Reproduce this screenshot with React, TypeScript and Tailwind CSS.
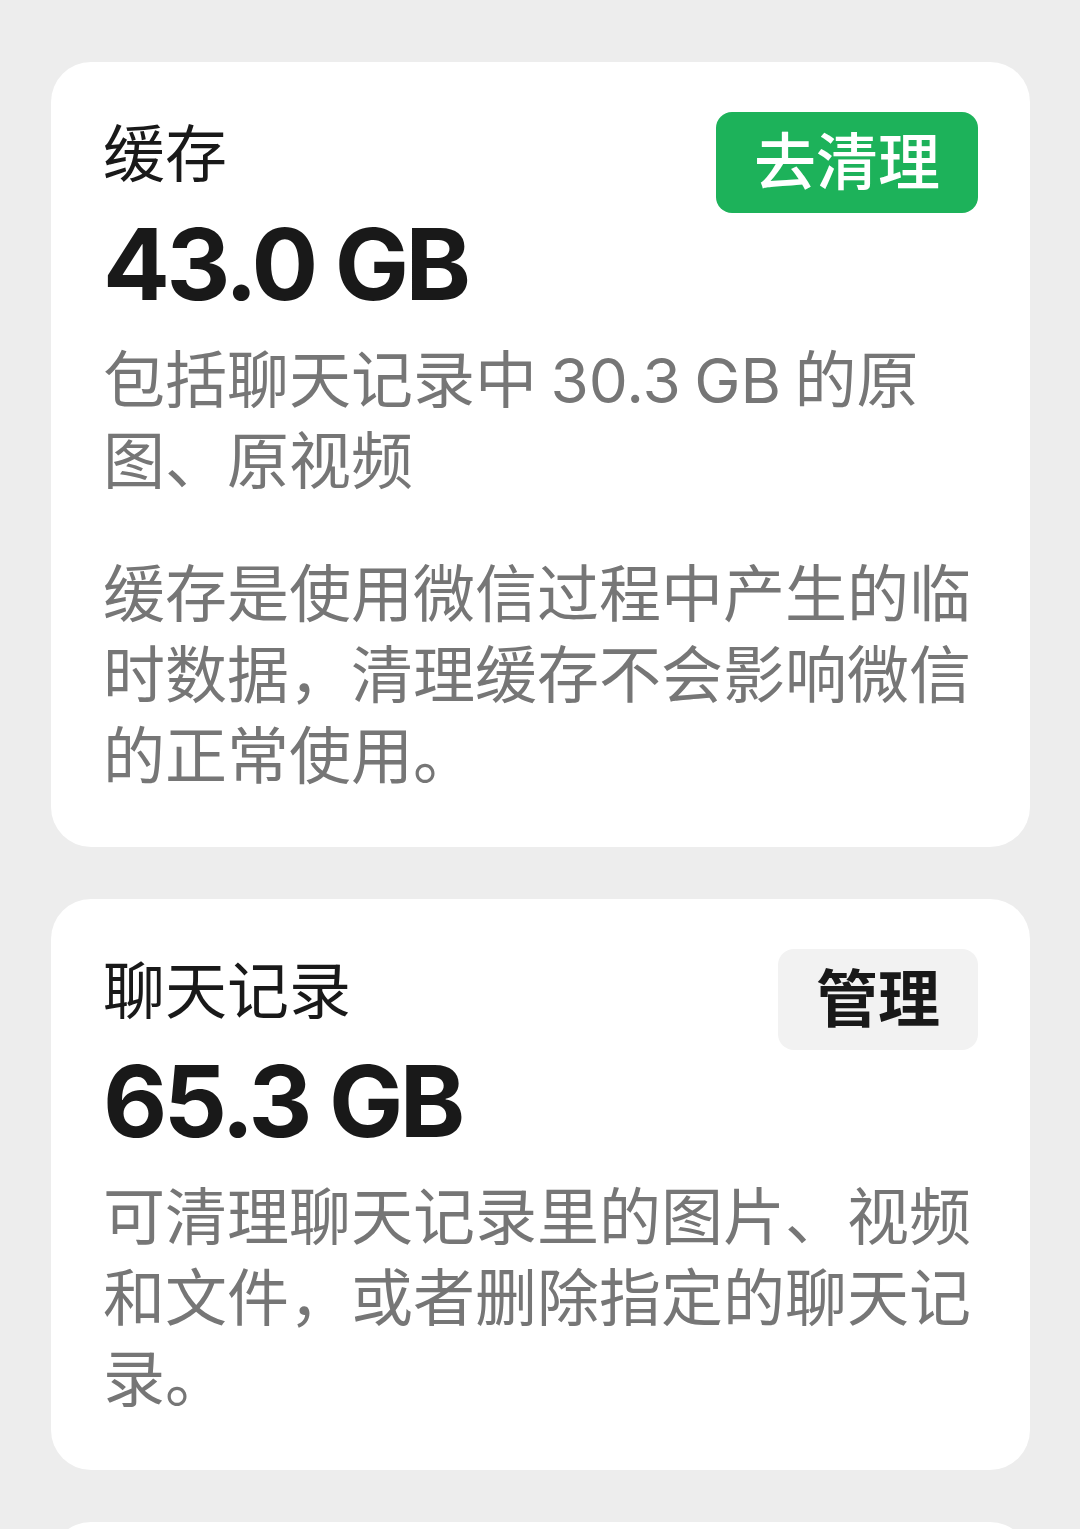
const font = { fontFamily: '"Inter", "Noto Sans CJK SC", sans-serif' };

type CardProps = {
  title: string;
  size: string;
  action: React.ReactNode;
  paragraphs: string[];
};

function StorageCard({ title, size, action, paragraphs }: CardProps) {
  return (
    <div className="rounded-[40px] bg-white px-[52px] pt-[50px] pb-[50px]">
      <div className="flex items-start justify-between">
        <div className="text-[62px] leading-[86px] text-[#191919]">{title}</div>
        {action}
      </div>
      <div className="mt-[2px] text-[99px] font-bold leading-[99px] tracking-[-3.5px] text-[#191919]">
        {size}
      </div>
      <div className="mt-[26px] flex max-w-[869px] flex-col gap-[52px]">
        {paragraphs.map((p) => (
          <p key={p} className="text-[62px] leading-[81px] text-[#767676] [word-spacing:-4px]">
            {p}
          </p>
        ))}
      </div>
    </div>
  );
}

export default function App() {
  return (
    <div
      className="flex h-[1529px] flex-col gap-[52px] overflow-hidden bg-[#ededed] pt-[62px] pr-[50px] pl-[51px]"
      style={font}
    >
      <StorageCard
        title="缓存"
        size="43.0 GB"
        action={
          <button className="h-[101px] rounded-[16px] bg-[#1db25a] px-[38px] text-[62px] font-medium leading-[101px] text-white">
            去清理
          </button>
        }
        paragraphs={[
          "包括聊天记录中 30.3 GB 的原图、原视频",
          "缓存是使用微信过程中产生的临时数据，清理缓存不会影响微信的正常使用。",
        ]}
      />
      <StorageCard
        title="聊天记录"
        size="65.3 GB"
        action={
          <button className="h-[101px] rounded-[16px] bg-[#f2f2f2] px-[38px] text-[62px] font-bold leading-[101px] text-[#191919]">
            管理
          </button>
        }
        paragraphs={["可清理聊天记录里的图片、视频和文件，或者删除指定的聊天记录。"]}
      />
      <div className="h-[200px] shrink-0 rounded-[40px] bg-white" />
    </div>
  );
}
